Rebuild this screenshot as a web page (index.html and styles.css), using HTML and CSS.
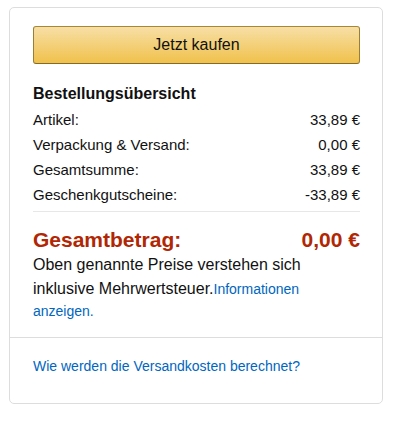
FILE: index.html
```html
<!DOCTYPE html>
<html lang="de">
<head>
<meta charset="utf-8">
<title>Bestellung</title>
<link rel="stylesheet" href="styles.css">
</head>
<body>
<div class="card">
  <div class="main">
    <button class="buy" type="button">Jetzt kaufen</button>
    <h3 class="title">Bestellungsübersicht</h3>
    <div class="rows">
      <div class="row"><span>Artikel:</span><span>33,89 €</span></div>
      <div class="row"><span>Verpackung &amp; Versand:</span><span>0,00 €</span></div>
      <div class="row"><span>Gesamtsumme:</span><span>33,89 €</span></div>
      <div class="row"><span>Geschenkgutscheine:</span><span>-33,89 €</span></div>
    </div>
    <div class="total"><span>Gesamtbetrag:</span><span>0,00 €</span></div>
    <div class="note"><span class="note-text">Oben genannte Preise verstehen sich inklusive Mehrwertsteuer.</span><a class="link" href="#">Informationen anzeigen.</a></div>
  </div>
  <div class="foot">
    <a class="link" href="#">Wie werden die Versandkosten berechnet?</a>
  </div>
</div>
</body>
</html>
```
FILE: styles.css
```css
html, body {
  margin: 0;
  padding: 0;
  background: #fff;
}
body {
  font-family: "Liberation Sans", Arial, sans-serif;
  color: #111;
}
.card {
  box-sizing: border-box;
  width: 374px;
  height: 397px;
  margin: 7px 0 0 9px;
  border: 1px solid #ddd;
  border-radius: 5px;
}
.main {
  padding: 18px 22px 16px 23px;
  border-bottom: 1px solid #ddd;
}
.buy {
  display: block;
  box-sizing: border-box;
  width: 100%;
  height: 38px;
  margin: 0;
  padding: 0;
  border: 1px solid;
  border-color: #a88734 #9c7e31 #846a29;
  border-radius: 3px;
  background: linear-gradient(to bottom, #f7dfa5, #f0c14b);
  font-family: "Liberation Sans", Arial, sans-serif;
  font-size: 16px;
  color: #111;
  cursor: pointer;
}
.title {
  margin: 17px 0 0;
  font-size: 16px;
  line-height: 26px;
  font-weight: bold;
  color: #111;
}
.rows {
  border-bottom: 1px solid #e7e7e7;
  padding-bottom: 4px;
}
.row {
  display: flex;
  justify-content: space-between;
  font-size: 15px;
  line-height: 25px;
}
.total {
  display: flex;
  justify-content: space-between;
  margin-top: 14px;
  font-size: 21px;
  line-height: 27px;
  font-weight: bold;
  color: #b12704;
}
.note {
  font-size: 14px;
  line-height: 20px;
}
.note-text {
  font-size: 16px;
  line-height: 24px;
}
.link {
  color: #0066c0;
  text-decoration: none;
  font-size: 14px;
}
.foot {
  padding: 18px 23px 0;
  font-size: 14px;
  line-height: 20px;
}
```
